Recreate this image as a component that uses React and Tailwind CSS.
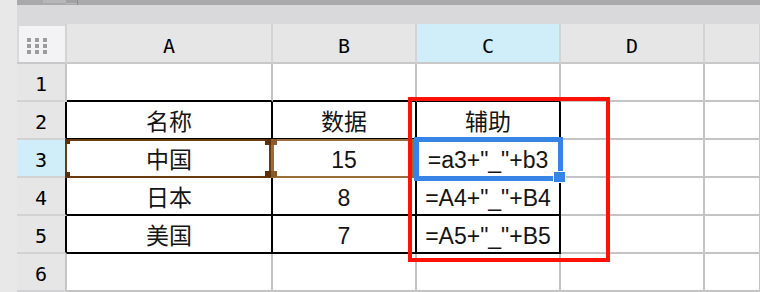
import React from "react";

const rows = [
  { n: 1, cells: ["", "", "", "", ""] },
  { n: 2, cells: ["名称", "数据", "辅助", "", ""] },
  { n: 3, cells: ["中国", "15", '=a3+"_"+b3', "", ""] },
  { n: 4, cells: ["日本", "8", '=A4+"_"+B4', "", ""] },
  { n: 5, cells: ["美国", "7", '=A5+"_"+B5', "", ""] },
  { n: 6, cells: ["", "", "", "", ""] },
];

const letters = ["A", "B", "C", "D", ""];

function cellBorder(rowNo, col) {
  const inTable = rowNo >= 2 && rowNo <= 5 && col <= 2;
  if (inTable) return "border-r-black border-b-black";
  if (rowNo === 1 && col <= 2) return "border-r-[#c4c4c4] border-b-black";
  return "border-r-[#c4c4c4] border-b-[#c4c4c4]";
}

function CornerDots() {
  return (
    <div className="grid grid-cols-[4px_4px_4px] grid-rows-[4px_4px_4px] gap-x-[4px] gap-y-[2px]">
      {Array.from({ length: 9 }).map((_, i) => (
        <div key={i} className="bg-[#9c9c9c]" />
      ))}
    </div>
  );
}

export default function App() {
  return (
    <div className="relative flex w-[760px] h-[292px] overflow-hidden bg-[#e8e8e8]">
      {/* left gutter */}
      <div className="w-[17px] shrink-0 bg-[#e8e8e8]" />

      <div className="flex flex-col flex-1 min-w-0">
        {/* toolbar edge */}
        <div className="h-[5px] bg-[#a9a9ab] flex">
          <div className="ml-[26px] w-[23px] h-[3px] bg-[#b6b6b8]" />
          <div className="w-[11px] h-[4px] bg-[#a2a2a4] border-b border-[#b8b8ba]" />
          <div className="w-[1px] h-[5px] bg-[#8e8e90]" />
        </div>
        <div className="h-[20px] bg-[#d9d9db]" />

        {/* sheet grid */}
        <div className="grid grid-cols-[50px_206px_144px_144px_144px_56px] font-['DejaVu_Sans_Mono',monospace] text-[20px] text-black">
          {/* header row */}
          <div className="h-[40px] border-r-2 border-b-2 border-r-[#d4d4d6] border-b-[#c9c9c9] bg-[#d9d9db] pl-[2px] pt-[2px]">
            <div className="h-full bg-[#f3f3f5] pl-[8px] pt-[12px]">
              <CornerDots />
            </div>
          </div>
          {letters.map((l, i) => (
            <div
              key={"h" + i}
              className={
                "h-[40px] border-r-2 border-b-2 border-r-[#d4d4d6] border-b-[#c9c9c9] flex items-center justify-center pt-[5px] " +
                (l === "C" ? "bg-[#cfeef9]" : "bg-[#e6e6e6]")
              }
            >
              {l}
            </div>
          ))}

          {/* body rows */}
          {rows.map((r) => (
            <React.Fragment key={r.n}>
              <div
                className={
                  "h-[38px] border-r-2 border-b-2 border-b-[#d2d2d4] flex items-center justify-center pt-[4px] " +
                  (r.n >= 2 && r.n <= 5 ? "border-r-black " : "border-r-[#c4c4c4] ") +
                  (r.n === 3 ? "bg-[#cfeef9]" : "bg-[#e6e6e6]")
                }
              >
                {r.n}
              </div>
              {r.cells.map((c, ci) => (
                <div
                  key={ci}
                  className={
                    "h-[38px] border-r-2 border-b-2 bg-white flex items-center justify-center pt-[5px] whitespace-nowrap font-['Liberation_Sans','Noto_Sans_CJK_SC',sans-serif] text-[23px] text-[#141414] " +
                    cellBorder(r.n, ci)
                  }
                >
                  {c}
                </div>
              ))}
            </React.Fragment>
          ))}
        </div>
      </div>

      {/* copy range around A3:B3 */}
      <div className="absolute left-[65px] top-[139px] w-[206px] h-[39px] border-2 border-[#6b3a0e]" />
      <div className="absolute left-[271px] top-[139px] w-[143px] h-[39px] border-2 border-l-[3px] border-[#9c6b3b]" />
      <div className="absolute left-[65px] top-[139px] w-[5px] h-[5px] bg-[#5c2f08]" />
      <div className="absolute left-[65px] top-[172px] w-[5px] h-[5px] bg-[#5c2f08]" />
      <div className="absolute left-[265px] top-[139px] w-[6px] h-[6px] bg-[#5c2f08]" />
      <div className="absolute left-[265px] top-[171px] w-[6px] h-[6px] bg-[#5c2f08]" />
      <div className="absolute left-[271px] top-[139px] w-[6px] h-[6px] bg-[#8a5a2c]" />
      <div className="absolute left-[271px] top-[171px] w-[6px] h-[6px] bg-[#8a5a2c]" />

      {/* highlight box */}
      <div className="absolute left-[408px] top-[97px] w-[202px] h-[165px] border-4 border-[#fe1208]" />

      {/* active cell C3 */}
      <div className="absolute left-[414px] top-[137px] w-[149px] h-[44px] border-[5px] border-[#3584e6]" />
      <div className="absolute left-[553px] top-[171px] w-[13px] h-[12px] bg-white p-[1px]">
        <div className="w-full h-full bg-[#3584e6]" />
      </div>
    </div>
  );
}
